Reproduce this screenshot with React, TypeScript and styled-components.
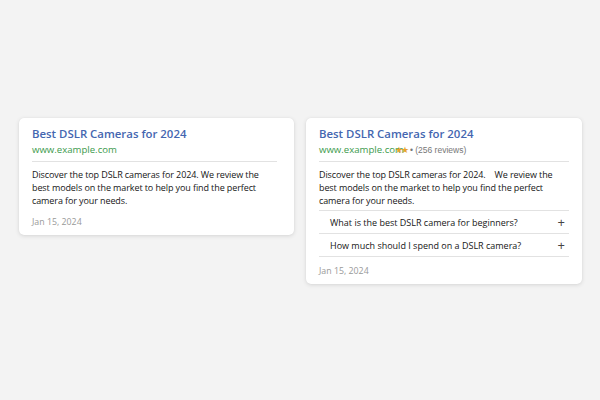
import React from "react";
import styled, { createGlobalStyle } from "styled-components";

const Global = createGlobalStyle`
  html, body { margin: 0; padding: 0; }
  body {
    width: 600px; height: 400px; overflow: hidden;
    background: #f3f3f3;
    font-family: "Open Sans", "Noto Sans", sans-serif;
  }
  #root { height: 400px; }
`;

const Page = styled.div`
  height: 400px;
  box-sizing: border-box;
  padding: 118px 18px 0 19px;
  display: grid;
  grid-template-columns: 275px 276px;
  column-gap: 12px;
  align-items: start;
`;

const Card = styled.div<{ $padRight: number }>`
  background: #fff;
  border-radius: 5px;
  box-shadow: 0 1px 4px rgba(0, 0, 0, 0.12), 0 0 1px rgba(0, 0, 0, 0.08);
  padding: 8px ${(p) => p.$padRight}px 6.5px 13px;
`;

const Title = styled.div`
  font-size: 11.4px;
  font-weight: 600;
  color: #4466b0;
  line-height: 16px;
`;

const UrlRow = styled.div`
  display: flex;
  align-items: baseline;
  font-size: 9.6px;
  line-height: 16px;
  padding-bottom: 3px;
  border-bottom: 1px solid #e2e2e2;
`;

const Url = styled.span`
  color: #3c9a4c;
`;

const Stars = styled.span`
  color: #e8a32a;
  font-size: 8.5px;
  margin-left: -9px;
  letter-spacing: -1.5px;
`;

const Reviews = styled.span`
  color: #777;
  font-size: 8.5px;
  margin-left: 2px;
  font-family: "Liberation Sans Narrow", "Liberation Sans", sans-serif;
`;

const Body = styled.p`
  margin: 5.5px 0 0;
  font-size: 9px;
  letter-spacing: -0.1px;
  line-height: 13px;
  color: #161616;
`;

const Faq = styled.div`
  margin-top: 3.5px;
  border-top: 1px solid #e2e2e2;
`;

const FaqRow = styled.div`
  display: flex;
  align-items: center;
  justify-content: space-between;
  height: 22px;
  padding: 0 4px 0 11px;
  border-bottom: 1px solid #e2e2e2;
  font-size: 9px;
  color: #161616;
`;

const Plus = styled.span`
  font-size: 13px;
  color: #444;
  line-height: 1;
`;

const DateText = styled.div<{ $gap: number }>`
  margin-top: ${(p) => p.$gap}px;
  font-size: 8.8px;
  color: #999;
  line-height: 13px;
`;

export default function App() {
  return (
    <>
      <Global />
      <Page>
        <Card $padRight={17}>
          <Title>Best DSLR Cameras for 2024</Title>
          <UrlRow>
            <Url>www.example.com</Url>
          </UrlRow>
          <Body>
            Discover the top DSLR cameras for 2024. We review the best models on
            the market to help you find the perfect camera for your needs.
          </Body>
          <DateText $gap={9}>Jan 15, 2024</DateText>
        </Card>
        <Card $padRight={13}>
          <Title>Best DSLR Cameras for 2024</Title>
          <UrlRow>
            <Url>www.example.com</Url>
            <Stars>★★</Stars>
            <Reviews>• (256 reviews)</Reviews>
          </UrlRow>
          <Body>
            Discover the top DSLR cameras for 2024.&nbsp;&nbsp;&nbsp; We review
            the best models on the market to help you find the perfect camera
            for your needs.
          </Body>
          <Faq>
            <FaqRow>
              What is the best DSLR camera for beginners?<Plus>+</Plus>
            </FaqRow>
            <FaqRow>
              How much should I spend on a DSLR camera?<Plus>+</Plus>
            </FaqRow>
          </Faq>
          <DateText $gap={7.5}>Jan 15, 2024</DateText>
        </Card>
      </Page>
    </>
  );
}
